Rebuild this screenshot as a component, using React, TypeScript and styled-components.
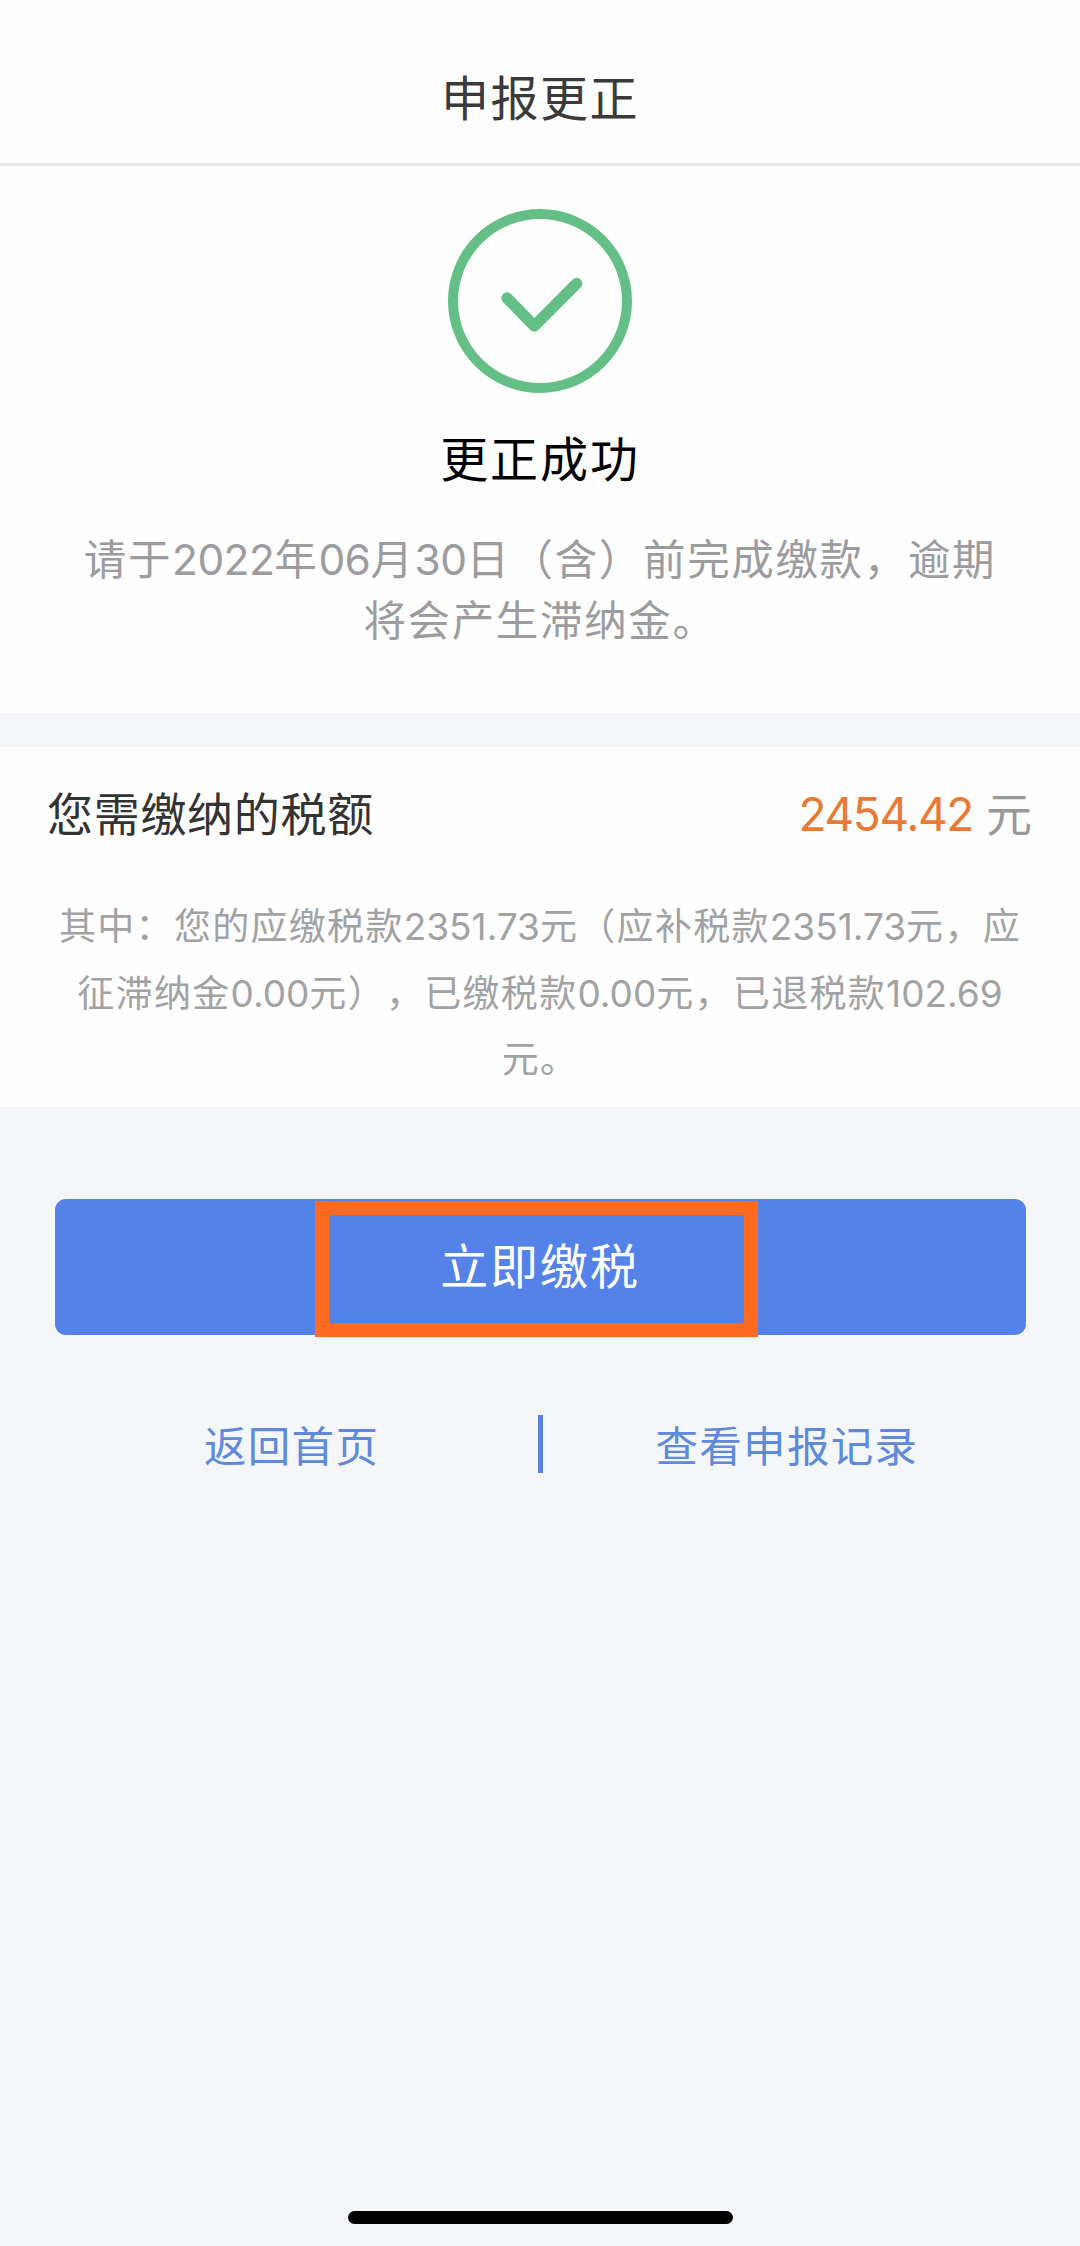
import React from "react";
import styled, { createGlobalStyle } from "styled-components";

const GlobalStyle = createGlobalStyle`
  * { box-sizing: border-box; }
  body {
    margin: 0;
    background: #f4f6fa;
    font-family: "Noto Sans CJK SC", sans-serif;
    text-spacing-trim: space-all;
  }
`;

const Page = styled.div`
  display: flex;
  flex-direction: column;
  width: 1080px;
  height: 2246px;
  background: #f4f6fa;
`;

const Header = styled.header`
  display: flex;
  align-items: center;
  justify-content: center;
  height: 166px;
  padding-top: 27px;
  background: #fefefe;
  border-bottom: 3px solid #e6e6e6;
`;

const Title = styled.h1`
  margin: 0;
  font-size: 48px;
  font-weight: 400;
  line-height: 60px;
  letter-spacing: 1.5px;
  color: #3a3a3a;
`;

const Result = styled.section`
  display: flex;
  flex-direction: column;
  align-items: center;
  height: 547px;
  padding-top: 43px;
  background: #fefefe;
`;

const ResultTitle = styled.h2`
  margin: 33px 0 0;
  font-size: 48px;
  font-weight: 400;
  line-height: 60px;
  letter-spacing: 1.9px;
  color: #000;
`;

const Notice = styled.p`
  display: flex;
  flex-direction: column;
  align-items: center;
  margin: 40px 0 0;
  font-size: 42.5px;
  line-height: 61px;
  letter-spacing: 1.65px;
  color: #9c9c9e;
  white-space: nowrap;
`;

const Line = styled.span<{ $height: number }>`
  display: block;
  height: ${(p) => p.$height}px;
`;

const Digits = styled.span<{ $track: number }>`
  font-family: Inter, "Noto Sans CJK SC", sans-serif;
  line-height: 1;
  letter-spacing: ${(p) => p.$track}px;
`;

const Tax = styled.section`
  height: 360px;
  margin-top: 34px;
  padding-top: 34px;
  background: #fefefe;
`;

const TaxRow = styled.div`
  display: flex;
  align-items: center;
  justify-content: space-between;
  height: 60px;
  padding: 0 48px 0 47px;
  font-size: 46px;
  line-height: 60px;
`;

const TaxLabel = styled.span`
  letter-spacing: 0.7px;
  color: #333;
`;

const TaxAmount = styled.span`
  display: flex;
  align-items: center;
  gap: 13px;
  color: #999;
`;

const Amount = styled.span`
  padding-top: 5px;
  font-family: Inter, sans-serif;
  letter-spacing: -1.4px;
  color: #e87a35;
`;

const Detail = styled.p`
  display: flex;
  flex-direction: column;
  align-items: center;
  margin: 50px 0 0;
  font-size: 37px;
  line-height: 66.6px;
  letter-spacing: 1.3px;
  color: #a2a2a4;
  white-space: nowrap;
`;

const PayButton = styled.button`
  position: relative;
  display: flex;
  align-items: center;
  justify-content: center;
  width: 971px;
  height: 136px;
  margin: 92px 0 0 54.5px;
  padding: 0 0 9px;
  border: 0;
  border-radius: 11px;
  background: #5482e8;
  font-family: inherit;
  font-size: 48px;
  line-height: 60px;
  letter-spacing: 1.9px;
  color: #fff;
`;

const Highlight = styled.span`
  position: absolute;
  top: 2px;
  left: 260.5px;
  width: 443px;
  height: 136px;
  border: 14px solid #ff6a21;
`;

const Links = styled.nav`
  display: flex;
  align-items: center;
  height: 58px;
  margin-top: 80px;
`;

const Link = styled.a<{ $shift: number }>`
  width: 537.5px;
  padding-left: ${(p) => p.$shift}px;
  font-size: 42.5px;
  line-height: 58px;
  letter-spacing: 1.3px;
  color: #5f89da;
`;

const Divider = styled.span`
  width: 5px;
  height: 58px;
  background: #5482d8;
`;

const HomeBar = styled.div`
  width: 385px;
  height: 13px;
  margin: auto auto 22px 348px;
  border-radius: 7px;
  background: #000;
`;

const SuccessIcon = () => (
  <svg width="184" height="184" viewBox="0 0 184 184" fill="none" stroke="#63bf86">
    <circle cx="92" cy="92" r="87" strokeWidth="10" />
    <path d="M59 89L86.3 117L128.7 74.5" strokeWidth="11.3" strokeLinecap="round" strokeLinejoin="round" />
  </svg>
);

export default function App() {
  return (
    <>
      <GlobalStyle />
      <Page lang="zh-CN">
        <Header>
          <Title>申报更正</Title>
        </Header>
        <Result>
          <SuccessIcon />
          <ResultTitle>更正成功</ResultTitle>
          <Notice>
            <Line $height={61}>
              请于<Digits $track={-0.6}>2022</Digits>年<Digits $track={-0.6}>06</Digits>月
              <Digits $track={-0.6}>30</Digits>日（含）前完成缴款，逾期
            </Line>
            <Line $height={61}>将会产生滞纳金。</Line>
          </Notice>
        </Result>
        <Tax>
          <TaxRow>
            <TaxLabel>您需缴纳的税额</TaxLabel>
            <TaxAmount>
              <Amount>2454.42</Amount>元
            </TaxAmount>
          </TaxRow>
          <Detail>
            <Line $height={66.6}>
              其中：您的应缴税款<Digits $track={0}>2351.73</Digits>元（应补税款
              <Digits $track={0}>2351.73</Digits>元，应
            </Line>
            <Line $height={66.6}>
              征滞纳金<Digits $track={0}>0.00</Digits>元），已缴税款<Digits $track={0}>0.00</Digits>
              元，已退税款<Digits $track={0}>102.69</Digits>
            </Line>
            <Line $height={66.6}>元。</Line>
          </Detail>
        </Tax>
        <PayButton>
          立即缴税
          <Highlight />
        </PayButton>
        <Links>
          <Link $shift={204}>返回首页</Link>
          <Divider />
          <Link $shift={113}>查看申报记录</Link>
        </Links>
        <HomeBar />
      </Page>
    </>
  );
}
